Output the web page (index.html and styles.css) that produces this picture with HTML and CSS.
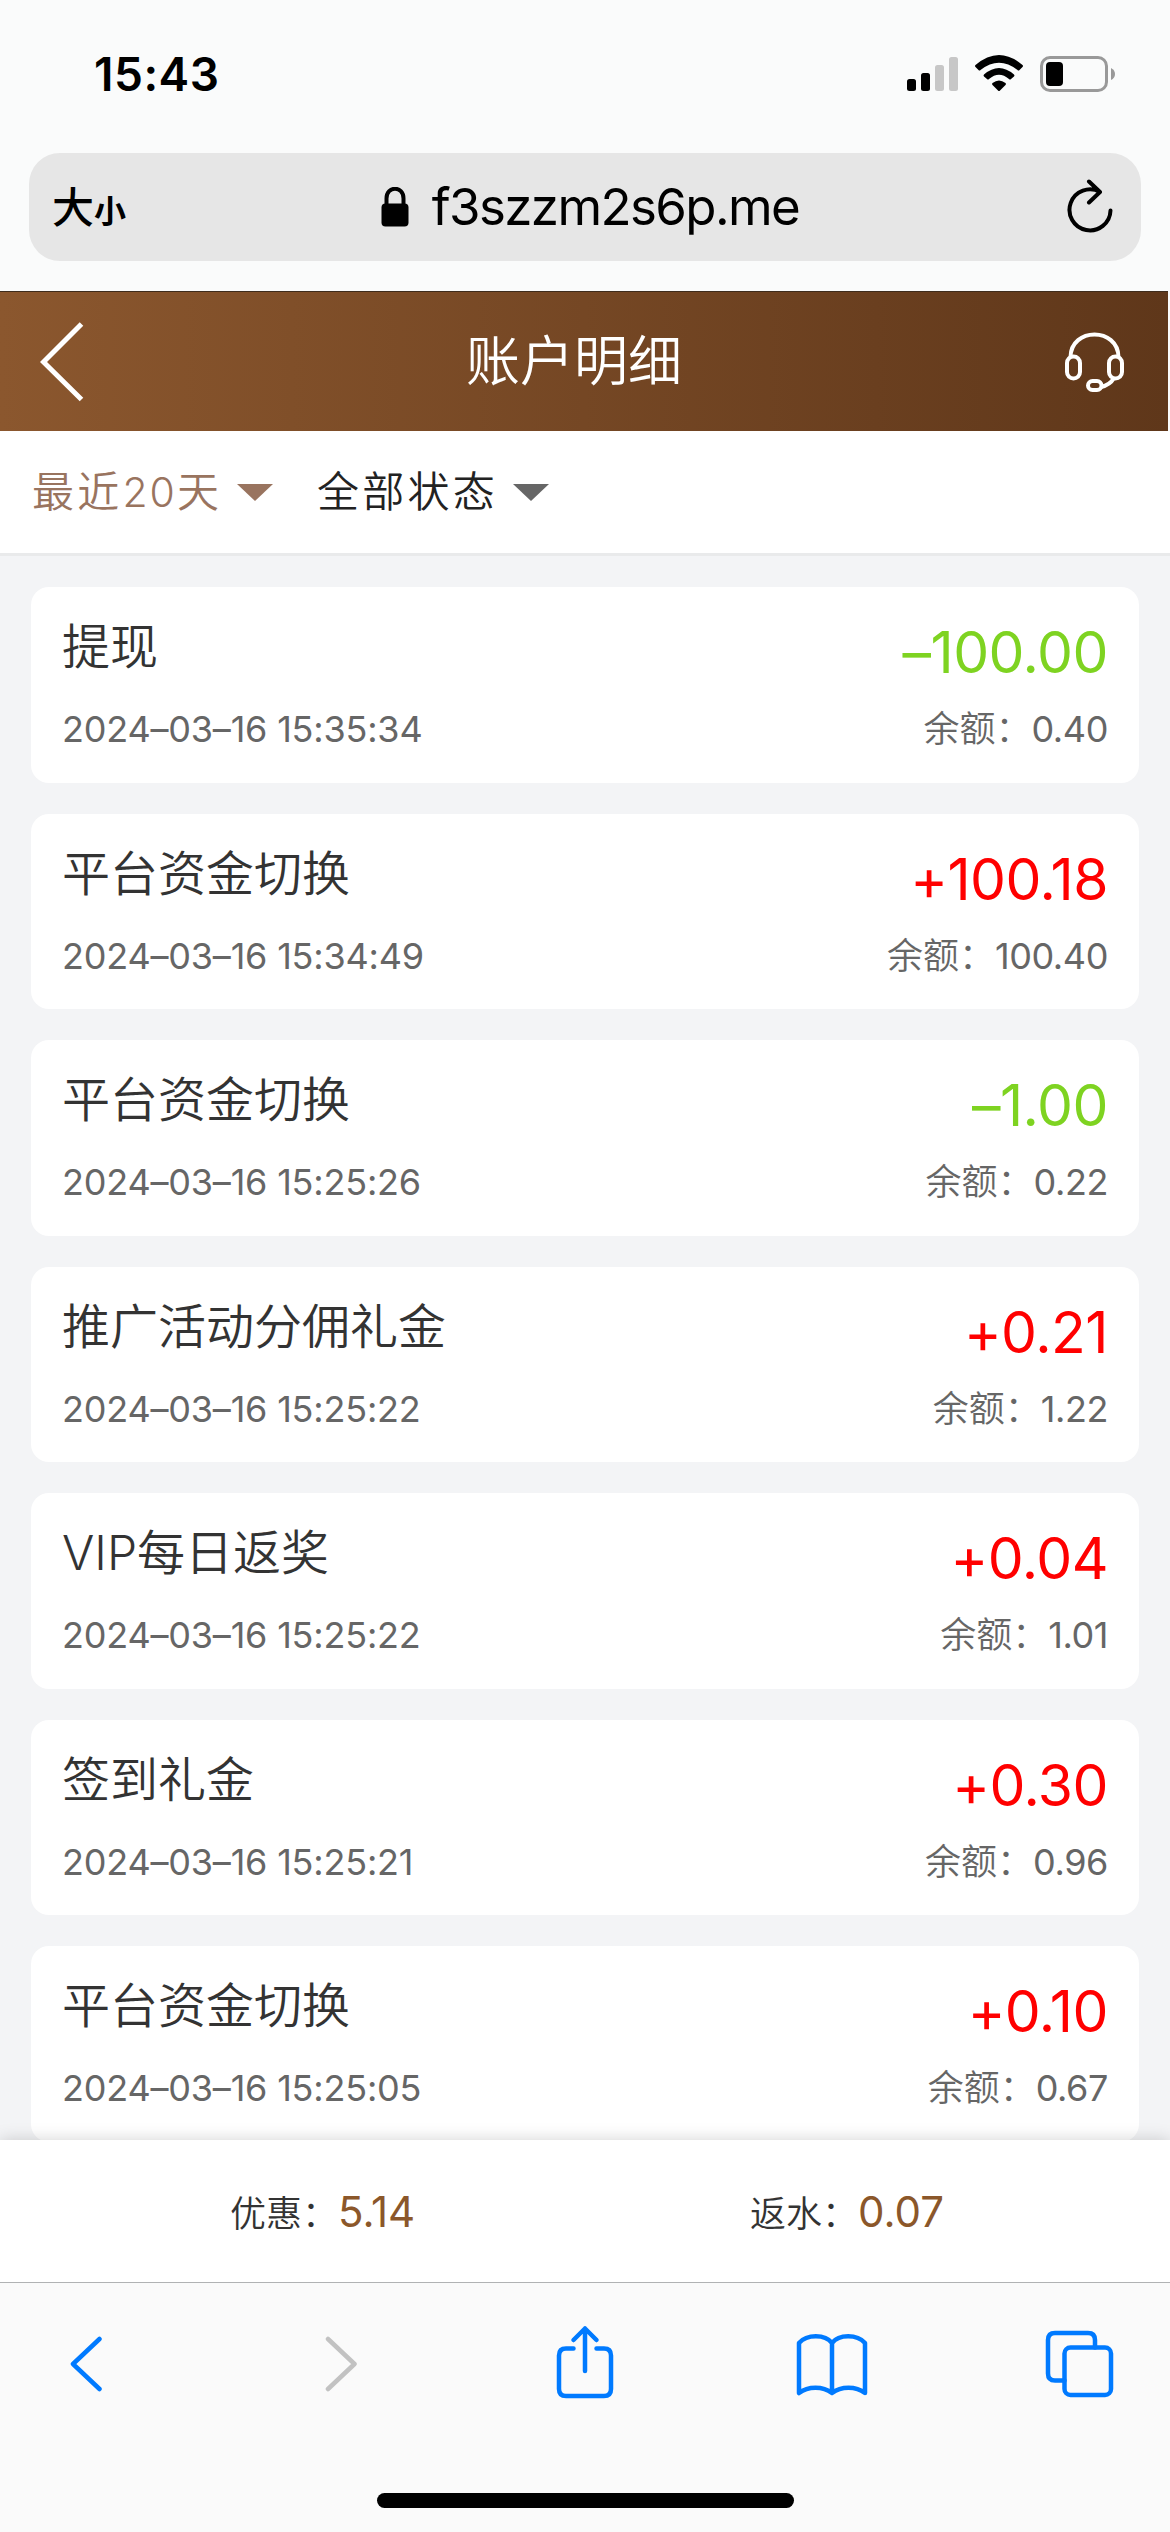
FILE: index.html
```html
<!DOCTYPE html>
<html lang="zh-CN">
<head>
<meta charset="utf-8">
<title>账户明细</title>
<link rel="stylesheet" href="styles.css">
</head>
<body>
<div class="status">
  <span class="time">15:43</span>
  <svg class="status-icons" width="210" height="40" viewBox="906 54 210 40">
    <rect x="907" y="79" width="9" height="12" rx="2.5"/>
    <rect x="921" y="73" width="9" height="18" rx="2.5"/>
    <rect x="935" y="65" width="9" height="26" rx="2.5" fill="#c7c7c7"/>
    <rect x="949" y="57" width="9" height="34" rx="2.5" fill="#c7c7c7"/>
    <path d="M975.500 65Q999 45 1022.500 65Q1023.500 66 1022.500 67L1019.500 70Q1018.500 71 1017.500 70Q999 55.500 980.500 70Q979.500 71 978.500 70L975.500 67Q974.500 66 975.500 65Z"/>
    <path d="M984 74.500Q999 61.500 1014 74.500Q1015 75.500 1014 76.500L1011 79Q1010 80 1009 79Q999 70.500 989 79Q988 80 987 79L984 76.500Q983 75.500 984 74.500Z"/>
    <path d="M992.500 83Q999 78 1005.500 83Q1006.500 84 1005.500 85L1000 90.500Q999 91.500 998 90.500L992.500 85Q991.500 84 992.500 83Z"/>
    <rect x="1041.500" y="57.500" width="65" height="33" rx="8.500" fill="none" stroke="#999" stroke-width="3"/>
    <rect x="1046" y="62" width="17" height="24" rx="4"/>
    <path d="M1111 68Q1115 70 1115 74T1111 80Z" fill="#999"/>
  </svg>
</div>
<div class="address">
  <div class="size"><span class="big">大</span><span class="small">小</span></div>
  <div class="site">
    <svg width="28" height="40" viewBox="0 0 28 40"><path d="M5.500 18V11.500C5.500 -1.500 22.500 -1.500 22.500 11.500V18" fill="none" stroke="#000" stroke-width="4"/><rect x=".5" y="16.500" width="27" height="23" rx="4"/></svg>
    <span class="url">f3szzm2s6p.me</span>
  </div>
  <svg class="reload" width="48" height="56" viewBox="1066 180 48 56"><path d="M1100 193A20.500 20.500 0 1 0 1110.500 211.500M1089 182.500L1100 193L1089 203.500" fill="none" stroke="#000" stroke-width="4" stroke-linecap="round" stroke-linejoin="round"/></svg>
</div>
<header class="header">
  <svg width="44" height="80" viewBox="40 321 44 80"><path d="M81.500 323L43.500 361L81.500 398.500" fill="none" stroke="#fff" stroke-width="5"/></svg>
  <h1>账户明细</h1>
  <svg width="60" height="60" viewBox="1064 331 60 60" fill="none" stroke="#fff" stroke-width="4"><path d="M1070.500 356C1071 326 1118 326 1118.500 356"/><rect x="1067" y="355.500" width="13" height="22" rx="6.500"/><rect x="1109" y="355.500" width="13" height="22" rx="6.500"/><rect x="1088" y="380" width="13.500" height="9" rx="4.500"/><path d="M1101 386Q1110 384 1114 377"/></svg>
</header>
<nav class="filters">
  <button class="filter active"><span>最近<small>20</small>天</span><i></i></button>
  <button class="filter"><span>全部状态</span><i></i></button>
</nav>
<main class="list">
  <article class="card"><h2>提现</h2><b class="out">–100.00</b><time>2024–03–16 15:35:34</time><p>余额：<span>0.40</span></p></article>
  <article class="card"><h2>平台资金切换</h2><b>+100.18</b><time>2024–03–16 15:34:49</time><p>余额：<span>100.40</span></p></article>
  <article class="card"><h2>平台资金切换</h2><b class="out">–1.00</b><time>2024–03–16 15:25:26</time><p>余额：<span>0.22</span></p></article>
  <article class="card"><h2>推广活动分佣礼金</h2><b>+0.21</b><time>2024–03–16 15:25:22</time><p>余额：<span>1.22</span></p></article>
  <article class="card"><h2>VIP每日返奖</h2><b>+0.04</b><time>2024–03–16 15:25:22</time><p>余额：<span>1.01</span></p></article>
  <article class="card"><h2>签到礼金</h2><b>+0.30</b><time>2024–03–16 15:25:21</time><p>余额：<span>0.96</span></p></article>
  <article class="card"><h2>平台资金切换</h2><b>+0.10</b><time>2024–03–16 15:25:05</time><p>余额：<span>0.67</span></p></article>
</main>
<section class="totals">
  <div>优惠：<span>5.14</span></div>
  <div>返水：<span>0.07</span></div>
</section>
<footer class="toolbar">
  <div class="tools">
    <svg class="back" width="32" height="76" viewBox="70 2323 32 76"><path d="M99.500 2339L73 2364L99.500 2389"/></svg>
    <svg class="forward" width="32" height="76" viewBox="325 2323 32 76"><path d="M328 2339L354.500 2364L328 2389"/></svg>
    <svg class="share" width="58" height="76" viewBox="556 2323 58 76"><path d="M573.500 2348.500H566Q559 2348.500 559 2355.500V2389Q559 2396 566 2396H604Q611 2396 611 2389V2355.500Q611 2348.500 604 2348.500H596.500M585 2371V2328.500M573.500 2340L585 2328.500L596.500 2340"/></svg>
    <svg class="book" width="72" height="76" viewBox="796 2323 72 76"><path d="M799 2393V2343C807 2334 825 2334 832 2343C839 2334 857 2334 865 2343V2393C856 2386 841 2386 832 2393C823 2386 808 2386 799 2393ZM832 2343V2393"/></svg>
    <svg width="70" height="76" viewBox="1045 2323 70 76"><rect x="1064.500" y="2347.500" width="46.500" height="47.500" rx="6"/><path d="M1064.500 2380.500H1055Q1048 2380.500 1048 2373.500V2340Q1048 2333 1055 2333H1088Q1095 2333 1095 2340V2347.500"/></svg>
  </div>
  <div class="home"></div>
</footer>
</body>
</html>
```
FILE: styles.css
```css
* { box-sizing: border-box; margin: 0; padding: 0; }
body {
  width: 1170px; height: 2532px; overflow: hidden;
  display: flex; flex-direction: column;
  background: #fafbfb; color: #333;
  font-family: Inter, "Noto Sans CJK SC", sans-serif;
}
svg { display: block; flex: none; }
.status { height: 153px; flex: none; padding: 0 54px 0 94px; display: flex; justify-content: space-between; align-items: flex-start; }
.time { margin-top: 46px; font-size: 46px; line-height: 56px; font-weight: 600; color: #000; letter-spacing: .5px; }
.status-icons { margin-top: 54px; }
.address { height: 108px; flex: none; margin: 0 29px 30px; padding: 0 27px 0 23px; border-radius: 31px; background: #e6e6e6; color: #000; display: flex; align-items: center; justify-content: space-between; }
.size { width: 76px; display: flex; align-items: baseline; font-family: "Noto Sans CJK SC", sans-serif; font-weight: 500; line-height: 60px; }
.big { font-size: 42px; }
.small { font-size: 32px; font-weight: 700; }
.site { display: flex; align-items: center; gap: 23px; margin-right: 14px; }
.url { font-size: 51px; line-height: 60px; white-space: nowrap; letter-spacing: -1.600px; }
.header { height: 140px; flex: none; margin-right: 2px; padding: 0 44px 0 40px; display: flex; align-items: center; justify-content: space-between; border-top: 1px solid #3f2c1c; background: linear-gradient(90deg, #8b572e, #5f371a); color: #fff; }
.header h1 { font-size: 54px; line-height: 80px; font-weight: 350; }
.filters { height: 125px; flex: none; padding: 0 32px; display: flex; align-items: center; gap: 44px; background: #fff; border-bottom: 3px solid #e9eaeb; }
.filter { border: 0; background: none; display: flex; align-items: center; gap: 15px; font: 350 42px/60px Inter, "Noto Sans CJK SC", sans-serif; letter-spacing: 3.200px; color: #222; }
.filter small { font-size: 41px; letter-spacing: 2px; }
.filter i { border: 18px solid transparent; border-top: 17px solid #666; border-bottom: 0; }
.filter.active { color: #99745f; }
.filter.active i { border-top-color: #99745f; }
.list { flex: 1; min-height: 0; overflow: hidden; padding: 31px 31px 0; display: flex; flex-direction: column; gap: 31px; background: #f3f4f6; }
.card { height: 195.500px; flex: none; padding: 24px 31px; border-radius: 18px; background: #fff; display: grid; grid-template-columns: 1fr auto; grid-template-rows: 84px 72px; }
.card h2 { font-size: 48px; line-height: 72px; font-weight: 350; }
.card b { font-size: 57px; line-height: 84px; font-weight: 400; letter-spacing: -.5px; color: #f00; text-align: right; }
.card b.out { color: #7ed321; }
.card time, .card p { font-size: 36px; line-height: 68px; font-weight: 350; color: #666; }
.card time { font-weight: 400; letter-spacing: -.2px; }
.card p { text-align: right; }
.card p span { font-weight: 400; letter-spacing: -.4px; }
.totals { height: 142px; flex: none; padding: 0 226px 0 230px; display: flex; align-items: center; justify-content: space-between; background: #fff; box-shadow: 0 0 16px rgba(0,0,0,.18); z-index: 1; font-size: 36px; font-weight: 350; }
.totals span { font-size: 42px; font-weight: 400; color: #8b572a; }
.toolbar { height: 250px; flex: none; border-top: 1px solid #b0b2b3; background: #fafafa; z-index: 2; display: flex; flex-direction: column; align-items: center; }
.tools { width: 100%; padding: 40px 0 0 70px; display: flex; }
.tools svg { fill: none; stroke: #007aff; stroke-width: 4.500; stroke-linecap: round; stroke-linejoin: round; }
.tools .back { margin-right: 223px; }
.tools .forward { margin-right: 199px; stroke: #c2c2c2; }
.tools .share { margin-right: 182px; }
.tools .book { margin-right: 177px; }
.home { width: 417px; height: 15px; margin-top: 94px; border-radius: 8px; background: #000; }
```
